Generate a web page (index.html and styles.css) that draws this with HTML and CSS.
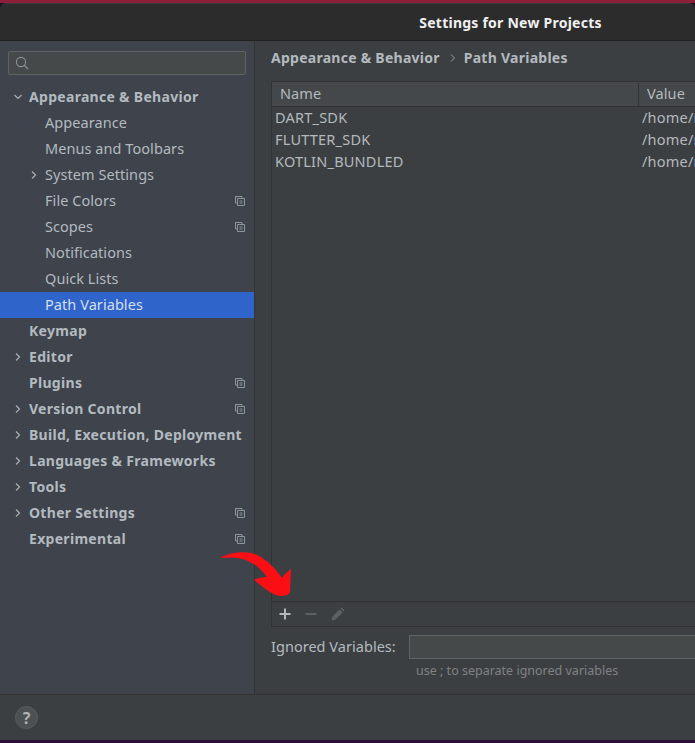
FILE: index.html
```html
<!DOCTYPE html>
<html lang="en">
<head>
<meta charset="utf-8">
<title>Settings for New Projects</title>
<link rel="stylesheet" href="styles.css">
</head>
<body>
<div class="strip-top"></div>
<div class="window">
  <header class="titlebar"><span class="title">Settings for New Projects</span></header>
  <div class="main">
    <aside class="sidebar">
      <div class="search">
        <svg class="search-icon" width="14" height="14" viewBox="0 0 14 14"><circle cx="6" cy="6" r="4.6" fill="none" stroke="#8b9196" stroke-width="1.1"/><path d="M9.4 9.4 13 13" stroke="#8b9196" stroke-width="1.2" fill="none"/></svg>
      </div>
      <ul class="tree">
        <li class="row bold"><svg class="chev" viewBox="0 0 10 10"><path d="M1.5 3 5 6.5 8.5 3"/></svg><span>Appearance &amp; Behavior</span></li>
        <li class="row sub"><span>Appearance</span></li>
        <li class="row sub"><span>Menus and Toolbars</span></li>
        <li class="row sub"><svg class="chev sub-chev" viewBox="0 0 10 10"><path d="M3 1.5 6.5 5 3 8.5"/></svg><span>System Settings</span></li>
        <li class="row sub"><span>File Colors</span><svg class="copy" viewBox="0 0 10 10"><path d="M2.5.5H.5v6.500h2M2.5 2.5h7v7h-7zM4.500 5h3M4.500 7h3"/><path d="M.5.500h6.500v2"/></svg></li>
        <li class="row sub"><span>Scopes</span><svg class="copy" viewBox="0 0 10 10"><path d="M2.500.5H.5v6.500h2M2.500 2.500h7v7h-7zM4.500 5h3M4.500 7h3"/><path d="M.5.500h6.500v2"/></svg></li>
        <li class="row sub"><span>Notifications</span></li>
        <li class="row sub"><span>Quick Lists</span></li>
        <li class="row sub selected"><span>Path Variables</span></li>
        <li class="row bold"><span>Keymap</span></li>
        <li class="row bold"><svg class="chev" viewBox="0 0 10 10"><path d="M3 1.500 6.500 5 3 8.500"/></svg><span>Editor</span></li>
        <li class="row bold"><span>Plugins</span><svg class="copy" viewBox="0 0 10 10"><path d="M2.500.5H.5v6.500h2M2.500 2.500h7v7h-7zM4.500 5h3M4.500 7h3"/><path d="M.5.500h6.500v2"/></svg></li>
        <li class="row bold"><svg class="chev" viewBox="0 0 10 10"><path d="M3 1.500 6.500 5 3 8.500"/></svg><span>Version Control</span><svg class="copy" viewBox="0 0 10 10"><path d="M2.500.5H.5v6.500h2M2.500 2.500h7v7h-7zM4.500 5h3M4.500 7h3"/><path d="M.5.500h6.500v2"/></svg></li>
        <li class="row bold"><svg class="chev" viewBox="0 0 10 10"><path d="M3 1.500 6.500 5 3 8.500"/></svg><span>Build, Execution, Deployment</span></li>
        <li class="row bold"><svg class="chev" viewBox="0 0 10 10"><path d="M3 1.500 6.500 5 3 8.500"/></svg><span>Languages &amp; Frameworks</span></li>
        <li class="row bold"><svg class="chev" viewBox="0 0 10 10"><path d="M3 1.500 6.500 5 3 8.500"/></svg><span>Tools</span></li>
        <li class="row bold"><svg class="chev" viewBox="0 0 10 10"><path d="M3 1.500 6.500 5 3 8.500"/></svg><span>Other Settings</span><svg class="copy" viewBox="0 0 10 10"><path d="M2.500.5H.5v6.500h2M2.500 2.500h7v7h-7zM4.500 5h3M4.500 7h3"/><path d="M.5.500h6.500v2"/></svg></li>
        <li class="row bold"><span>Experimental</span><svg class="copy" viewBox="0 0 10 10"><path d="M2.500.5H.5v6.500h2M2.500 2.500h7v7h-7zM4.500 5h3M4.500 7h3"/><path d="M.5.500h6.500v2"/></svg></li>
      </ul>
    </aside>
    <section class="content">
      <div class="crumbs"><span>Appearance &amp; Behavior</span><svg class="crumb-sep" viewBox="0 0 6 10"><path d="M1 1.500 4.500 5 1 8.500"/></svg><span>Path Variables</span></div>
      <div class="panel">
        <div class="thead"><div class="col-name">Name</div><div class="col-value">Value</div></div>
        <div class="tbody">
          <div class="trow"><div class="cell-name">DART_SDK</div><div class="cell-value">/home/r</div></div>
          <div class="trow"><div class="cell-name">FLUTTER_SDK</div><div class="cell-value">/home/r</div></div>
          <div class="trow"><div class="cell-name">KOTLIN_BUNDLED</div><div class="cell-value">/home/r</div></div>
        </div>
        <div class="toolbar">
          <svg class="tool" viewBox="0 0 12 12"><path d="M6 .5v11M.5 6h11" stroke="#b4b8bb" stroke-width="2" fill="none"/></svg>
          <svg class="tool" viewBox="0 0 12 12"><path d="M.5 6h11" stroke="#5d6062" stroke-width="2" fill="none"/></svg>
          <svg class="tool-edit" viewBox="0 0 14 14"><path d="M.5 13.500l.7-3.800 7.300-7.300 3.100 3.100-7.300 7.300zM9.500 1.400l1.100-1 3 3-1.100 1.100z" fill="#5d6062"/></svg>
        </div>
      </div>
      <div class="ignored"><label class="ignored-label">Ignored Variables:</label><div class="ignored-input"></div></div>
      <div class="hint">use ; to separate ignored variables</div>
    </section>
  </div>
  <footer class="footer"><div class="help">?</div></footer>
</div>
<div class="strip-bottom"></div>
<svg class="arrow" width="76" height="48" viewBox="0 0 76 48"><path d="M1 8C10 2 28 0 38 5C48 10 57 19 63 28C65 25 68 22 72 19L71 42Q70 46 61 46C52 45 42 35 35 30C39 28 44 27 48 27C42 19 36 14 31 12C22 7 12 7 1 8Z" fill="#fb0f14"/></svg>
</body>
</html>
```
FILE: styles.css
```css
* { box-sizing: border-box; }
html, body { margin: 0; padding: 0; height: 743px; overflow: hidden; background: #1c0f22; }
body { position: relative; display: flex; flex-direction: column; font-family: "Noto Sans", "Open Sans", sans-serif; font-size: 14.500px; color: #b3babf; }
ul { list-style: none; margin: 0; padding: 0; }
.strip-top { height: 3px; background: #8d1f39; flex: none; }
.strip-bottom { height: 3px; background: #2a0e33; flex: none; }
.window { flex: 1; display: flex; flex-direction: column; min-height: 0; }
.titlebar { height: 38px; flex: none; background: #2c2c2c; border-top: 1px solid #3a3a3a; border-bottom: 1px solid #222; display: flex; align-items: center; justify-content: center; border-radius: 6px 6px 0 0; padding-left: 326px; }
.title { color: #f0f0f0; font-weight: 700; font-size: 14px; letter-spacing: .24px; white-space: nowrap; }
.main { flex: 1; display: flex; min-height: 0; border-bottom: 1px solid #323232; }
.sidebar { width: 255px; flex: none; background: #3e434c; border-right: 1px solid #323436; padding-top: 10px; }
.search { height: 24px; margin: 0 8px; background: #45494a; border: 1px solid #5f6365; border-radius: 2px; display: flex; align-items: center; padding-left: 6px; }
.search-icon { display: block; }
.tree { margin-top: 9px; }
.row { position: relative; height: 26px; display: flex; align-items: center; padding-left: 29px; padding-bottom: 2px; white-space: nowrap; }
.row.bold { font-weight: 700; font-size: 14px; letter-spacing: .3px; }
.row.sub { padding-left: 45px; letter-spacing: .06px; }
.row.selected { background: #2f65ca; color: #d5dfee; }
.chev { position: absolute; left: 13px; top: 8px; width: 10px; height: 10px; fill: none; stroke: #a9afb3; stroke-width: 1.200; }
.sub-chev { left: 29px; }
.copy { position: absolute; left: 235px; top: 8px; width: 10px; height: 10px; fill: none; stroke: #8f969b; stroke-width: 1; }
.content { flex: 1; min-width: 0; background: #3c3f41; padding: 0 0 0 16px; display: flex; flex-direction: column; overflow: hidden; }
.crumbs { height: 40px; flex: none; display: flex; align-items: center; font-weight: 700; font-size: 14px; letter-spacing: .26px; white-space: nowrap; padding-bottom: 8px; }
.crumb-sep { width: 6px; height: 10px; margin: 1px 8px 0 10px; fill: none; stroke: #9aa0a5; stroke-width: 1; }
.panel { height: 546px; flex: none; width: 440px; border: 1px solid #323232; border-right: none; display: flex; flex-direction: column; }
.thead { height: 25px; flex: none; display: flex; background: #45484a; border-bottom: 1px solid #323232; align-items: center; }
.col-name { width: 367px; height: 23px; padding-left: 8px; border-right: 1px solid #323232; line-height: 21px; letter-spacing: .1px; }
.col-value { padding-left: 8px; height: 23px; line-height: 21px; letter-spacing: .1px; }
.tbody { flex: 1; }
.trow { height: 22px; display: flex; align-items: center; padding-bottom: 2px; white-space: nowrap; letter-spacing: .22px; }
.cell-name { width: 367px; padding-left: 3px; }
.cell-value { padding-left: 3px; }
.toolbar { height: 25px; flex: none; border-top: 1px solid #323232; display: flex; align-items: center; gap: 14px; padding-left: 7px; }
.tool { width: 12px; height: 12px; display: block; }
.tool-edit { width: 14px; height: 14px; display: block; }
.ignored { display: flex; align-items: center; height: 24px; flex: none; margin-top: 8px; }
.ignored-label { width: 138px; flex: none; white-space: nowrap; padding-bottom: 2px; letter-spacing: .03px; }
.ignored-input { flex: 1; height: 24px; background: #45494a; border: 1px solid #5f6365; border-right: none; }
.hint { margin: 2px 0 0 145px; font-size: 12.500px; color: #7f8285; height: 20px; line-height: 20px; white-space: nowrap; }
.footer { height: 45px; flex: none; background: #3c3f41; display: flex; align-items: center; padding-left: 15px; }
.help { width: 23px; height: 23px; border-radius: 50%; background: #4c5052; border: 1px solid #5a5d5f; color: #b0b3b5; font-weight: 700; font-size: 16px; line-height: 1; display: flex; align-items: center; justify-content: center; }
.arrow { position: absolute; left: 219px; top: 550px; }
```
